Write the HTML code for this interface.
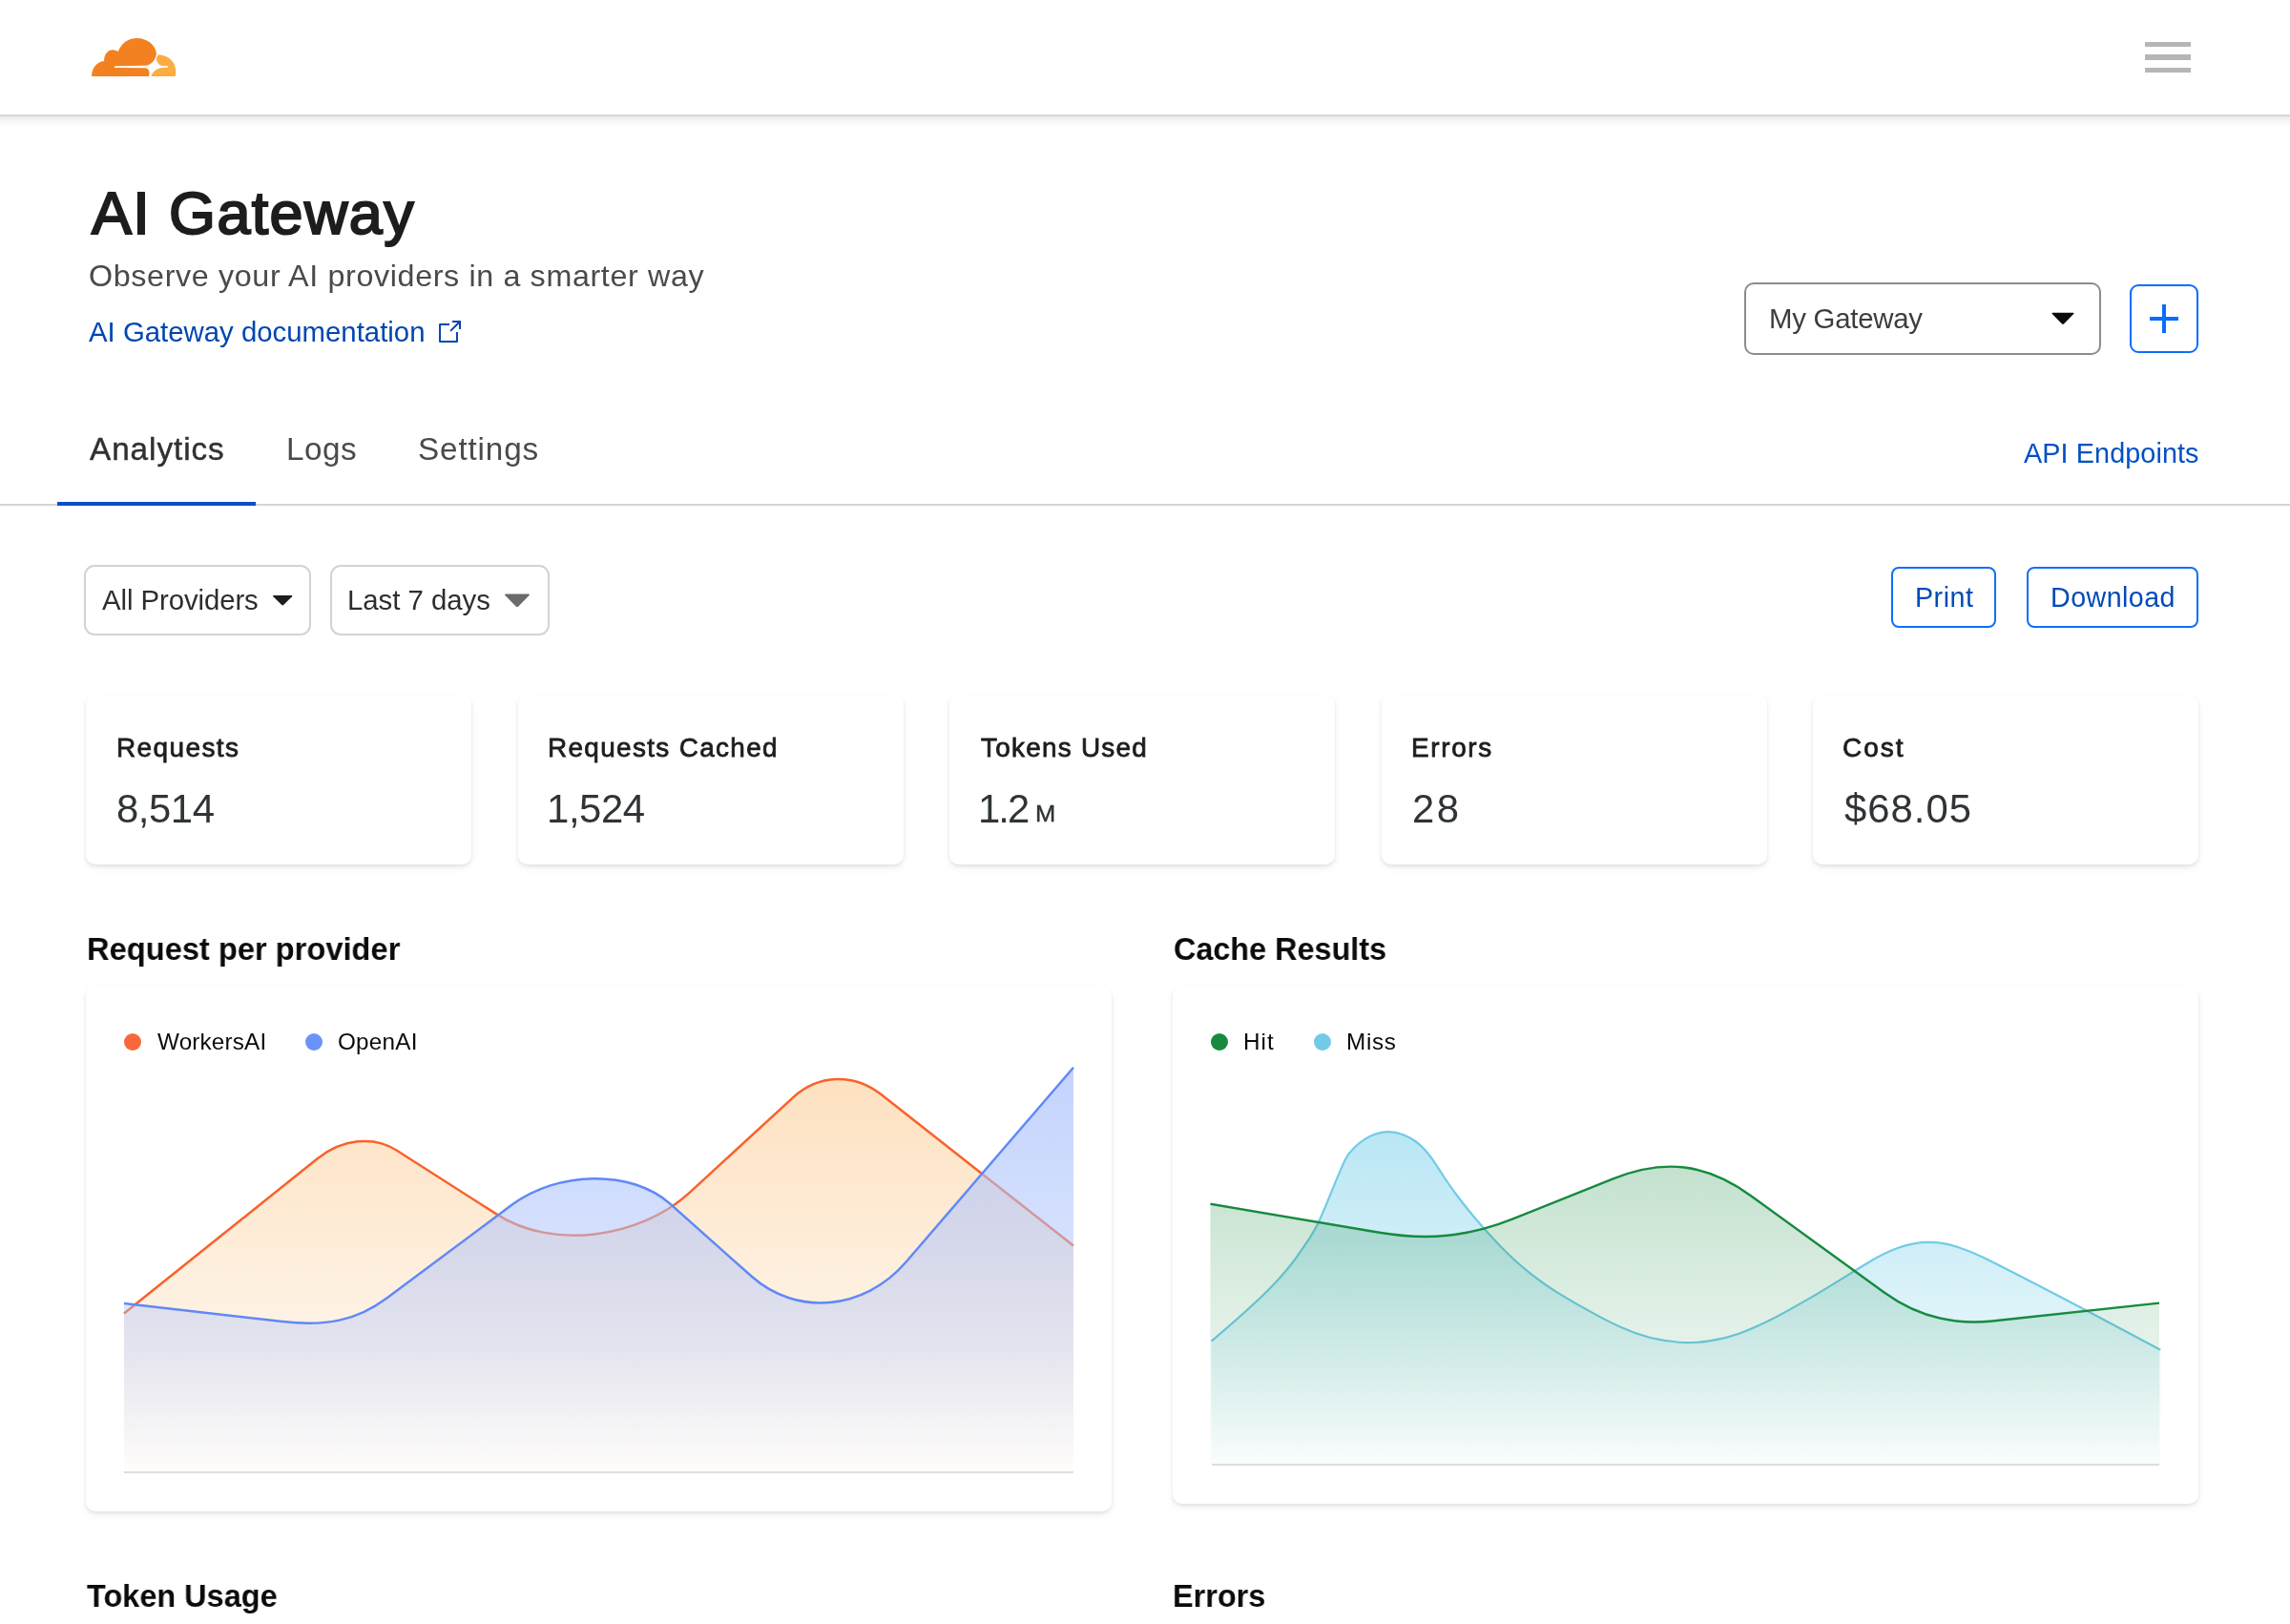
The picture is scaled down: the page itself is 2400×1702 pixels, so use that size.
<!DOCTYPE html>
<html lang="en">
<head>
<meta charset="utf-8">
<title>AI Gateway</title>
<style>
*{box-sizing:border-box;margin:0;padding:0}
html,body{width:2400px;height:1702px;background:#fff}
body{position:relative;font-family:"Liberation Sans",sans-serif;color:#1d1d1d}
.abs{position:absolute}
.t{position:absolute;white-space:pre;transform-origin:0 50%;will-change:transform;display:block;text-decoration:none;font-style:normal}
.hdrline{position:absolute;left:0;top:120px;width:2400px;height:2px;background:#d7d7d7}
.hdrshadow{position:absolute;left:0;top:122px;width:2400px;height:11px;background:linear-gradient(to bottom,rgba(0,0,0,.085),rgba(0,0,0,.04) 40%,rgba(0,0,0,0))}
.bar{position:absolute;left:2248px;width:48px;height:5.33px;background:#b6b6b6}
.select{position:absolute;left:1828px;top:296px;width:374px;height:76px;border:2px solid #8c8c8c;border-radius:10px;background:#fff}
.plus{position:absolute;left:2232px;top:298px;width:72px;height:72px;border:2px solid #0a6cff;border-radius:9px;background:#fff}
.tabline{position:absolute;left:0;top:528px;width:2400px;height:2px;background:#d5d5d5}
.tabactive{position:absolute;left:60px;top:526px;width:208px;height:4px;background:#0a4fc9}
.dd{position:absolute;top:592px;height:74px;border:2px solid #d3d3d3;border-radius:11px;background:#fff}
.btn{position:absolute;top:594px;height:64px;border:2px solid #1070f5;border-radius:8px;background:#fff}
.card{position:absolute;background:#fff;border-radius:10px;box-shadow:0 2px 4px rgba(0,0,0,.09),0 4px 10px rgba(0,0,0,.05)}
.stat{top:728px;width:404px;height:178px}
.dot{position:absolute;width:18px;height:18px;border-radius:50%}
svg{position:absolute;left:0;top:0;overflow:visible}
ul,li{list-style:none}
</style>
</head>
<body>
<header>
<div class="hdrline"></div><div class="hdrshadow"></div>
<a aria-label="Cloudflare"><svg class="abs" style="left:96px;top:40px" width="89" height="40" viewBox="183 228 1019 459">
<path fill="#f4811f" d="M183,687 C183,590 240,512 332,503 C330,420 380,368 435,368 C462,368 483,376 500,388 C540,290 620,228 725,228 C860,228 955,320 962,415 C950,490 900,552 835,558 L460,563 L458,585 L825,588 C870,592 888,632 870,687 Z"/>
<path fill="#fbad41" d="M985,425 C1110,430 1200,520 1196,640 L1190,687 L898,687 C915,630 960,590 1040,583 L1100,580 L1100,564 L1040,560 C985,552 958,510 962,462 Z"/>
</svg></a>
<div role="button" aria-label="Menu"><div class="bar" style="top:44px"></div><div class="bar" style="top:57.33px"></div><div class="bar" style="top:70.67px"></div></div>
</header>
<main>
<section aria-label="AI Gateway">
<h1 class="t" style="left:95.50px;top:191.50px;font-size:62.88px;line-height:62.88px;font-weight:400;color:#1d1d1d;letter-spacing:1.400px;-webkit-text-stroke:2.14px #1d1d1d;">AI Gateway</h1>
<p class="t" style="left:93.00px;top:273.19px;font-size:32.27px;line-height:32.27px;font-weight:400;color:#4a4a4a;letter-spacing:0.634px;">Observe your AI providers in a smarter way</p>
<a href="#" class="t" style="left:93.00px;top:333.35px;font-size:29.36px;line-height:29.36px;font-weight:400;color:#0046b0;letter-spacing:0.000px;">AI Gateway documentation</a>
<svg width="2400" height="1702"><g fill="none" stroke="#0046b0" stroke-width="2">
<path d="M471,340 H461.05 V358 H478.95 V347.9" stroke-linejoin="round"/>
<path d="M472.1,346.9 L481.5,337.5 M474,337.05 H482 V345"/>
</g></svg>
<div role="combobox" aria-label="Gateway"><div class="select"></div><svg width="2400" height="1702"><path d="M2151.3,327.8 h21.4 q1.5,0 0.5,1.3 l-10,10.2 q-1.2,1.1 -2.4,0 l-10,-10.2 q-1,-1.3 0.5,-1.3z" fill="#0a0a0a"/></svg><span class="t" style="left:1854.00px;top:319.15px;font-size:29.36px;line-height:29.36px;font-weight:400;color:#3d3d3d;letter-spacing:-0.244px;">My Gateway</span></div>
<div role="button" aria-label="Add gateway"><div class="plus"></div>
<div class="abs" style="left:2253px;top:331.5px;width:30px;height:4px;background:#0a6cff"></div>
<div class="abs" style="left:2266px;top:318.5px;width:4px;height:30px;background:#0a6cff"></div></div>
</section>
<nav aria-label="Sections">
<div class="tabline"></div><div class="tabactive"></div>
<ul><li><a href="#" class="t" style="left:94.00px;top:453.92px;font-size:33.28px;line-height:33.28px;font-weight:400;color:#313131;letter-spacing:0.950px;-webkit-text-stroke:0.45px #313131;">Analytics</a></li><li><a href="#" class="t" style="left:299.50px;top:453.92px;font-size:33.28px;line-height:33.28px;font-weight:400;color:#4a4a4a;letter-spacing:0.533px;">Logs</a></li><li><a href="#" class="t" style="left:437.50px;top:453.92px;font-size:33.28px;line-height:33.28px;font-weight:400;color:#4a4a4a;letter-spacing:0.857px;">Settings</a></li></ul>
<a href="#" class="t" style="left:2120.50px;top:460.54px;font-size:28.78px;line-height:28.78px;font-weight:400;color:#0051c3;letter-spacing:0.100px;">API Endpoints</a>
</nav>
<section aria-label="Filters">
<div role="button"><div class="dd" style="left:88px;width:238px"></div><span class="t" style="left:107.00px;top:613.55px;font-size:29.36px;line-height:29.36px;font-weight:400;color:#2d2d2d;letter-spacing:-0.083px;">All Providers</span></div>
<div role="button"><div class="dd" style="left:346px;width:230px"></div><span class="t" style="left:363.50px;top:613.55px;font-size:29.36px;line-height:29.36px;font-weight:400;color:#2d2d2d;letter-spacing:-0.020px;">Last 7 days</span></div>
<svg width="2400" height="1702">
<path d="M287,624 h18.5 q1.5,0 0.5,1.3 l-8.6,8.4 q-1.2,1.1 -2.4,0 l-8.6,-8.4 q-1,-1.3 0.6,-1.3z" fill="#1d1d1d"/>
<path d="M530,622.5 h24 q1.8,0 0.6,1.5 l-11.3,11.4 q-1.3,1.2 -2.6,0 l-11.3,-11.4 q-1.2,-1.5 0.6,-1.5z" fill="#6b6b6b"/>
</svg>
<div role="button"><div class="btn" style="left:1982px;width:110px"></div><span class="t" style="left:2006.50px;top:611.86px;font-size:28.63px;line-height:28.63px;font-weight:400;color:#004bb8;letter-spacing:0.500px;">Print</span></div>
<div role="button"><div class="btn" style="left:2124px;width:180px"></div><span class="t" style="left:2148.50px;top:611.86px;font-size:28.63px;line-height:28.63px;font-weight:400;color:#004bb8;letter-spacing:0.457px;">Download</span></div>
</section>
<section aria-label="Summary">
<article><div class="card stat" style="left:90px"></div><h3 class="t" style="left:121.50px;top:770.36px;font-size:27.93px;line-height:27.93px;font-weight:400;color:#1d1d1d;letter-spacing:1.429px;-webkit-text-stroke:0.78px #1d1d1d;">Requests</h3><p class="t" style="left:122.00px;top:826.67px;font-size:41.86px;line-height:41.86px;font-weight:400;color:#2f3437;letter-spacing:-0.450px;">8,514</p></article>
<article><div class="card stat" style="left:542.5px"></div><h3 class="t" style="left:574.00px;top:770.36px;font-size:27.93px;line-height:27.93px;font-weight:400;color:#1d1d1d;letter-spacing:1.329px;-webkit-text-stroke:0.78px #1d1d1d;">Requests Cached</h3><p class="t" style="left:573.00px;top:826.67px;font-size:41.86px;line-height:41.86px;font-weight:400;color:#2f3437;letter-spacing:-0.400px;">1,524</p></article>
<article><div class="card stat" style="left:995px"></div><h3 class="t" style="left:1028.00px;top:770.36px;font-size:27.93px;line-height:27.93px;font-weight:400;color:#1d1d1d;letter-spacing:1.240px;-webkit-text-stroke:0.78px #1d1d1d;">Tokens Used</h3><p class="t" style="left:1025.00px;top:826.67px;font-size:41.86px;line-height:41.86px;font-weight:400;color:#2f3437;letter-spacing:-2.000px;">1.2</p><span class="t" style="left:1085.00px;top:841.28px;font-size:24.71px;line-height:24.71px;font-weight:400;color:#2f3437;letter-spacing:0.000px;transform:scaleX(1.0323);-webkit-text-stroke:0.4px #2f3437;">M</span></article>
<article><div class="card stat" style="left:1447.5px"></div><h3 class="t" style="left:1478.50px;top:770.36px;font-size:27.93px;line-height:27.93px;font-weight:400;color:#1d1d1d;letter-spacing:1.640px;-webkit-text-stroke:0.78px #1d1d1d;">Errors</h3><p class="t" style="left:1480.00px;top:826.67px;font-size:41.86px;line-height:41.86px;font-weight:400;color:#2f3437;letter-spacing:2.400px;">28</p></article>
<article><div class="card stat" style="left:1900px"></div><h3 class="t" style="left:1931.00px;top:770.36px;font-size:27.93px;line-height:27.93px;font-weight:400;color:#1d1d1d;letter-spacing:2.000px;-webkit-text-stroke:0.78px #1d1d1d;">Cost</h3><p class="t" style="left:1933.00px;top:826.67px;font-size:41.86px;line-height:41.86px;font-weight:400;color:#2f3437;letter-spacing:1.000px;">$68.05</p></article>
</section>
<section aria-label="Request per provider">
<h2 class="t" style="left:90.50px;top:977.83px;font-size:33.87px;line-height:33.87px;font-weight:700;color:#0b0b0b;letter-spacing:0.000px;transform:scaleX(0.9640);">Request per provider</h2>
<div class="card" style="left:90px;top:1034px;width:1075px;height:550px"></div>
<div class="dot" style="left:130px;top:1083px;background:#f9683a"></div><span class="t" style="left:165.00px;top:1080.05px;font-size:24.27px;line-height:24.27px;font-weight:400;color:#0b0b0b;letter-spacing:0.175px;">WorkersAI</span>
<div class="dot" style="left:320px;top:1083px;background:#6b92f7"></div><span class="t" style="left:354.00px;top:1080.05px;font-size:24.27px;line-height:24.27px;font-weight:400;color:#0b0b0b;letter-spacing:0.240px;">OpenAI</span>
<svg width="2400" height="1702" role="img" aria-label="Requests per provider area chart">
<defs>
<linearGradient id="go" gradientUnits="userSpaceOnUse" x1="0" y1="1130" x2="0" y2="1543"><stop offset="0" stop-color="#fcc88c" stop-opacity=".55"/><stop offset="1" stop-color="#fcc88c" stop-opacity=".03"/></linearGradient>
<linearGradient id="gb" gradientUnits="userSpaceOnUse" x1="0" y1="1118" x2="0" y2="1543"><stop offset="0" stop-color="#afc4fc" stop-opacity=".74"/><stop offset=".43" stop-color="#afc4fc" stop-opacity=".52"/><stop offset=".7" stop-color="#afc4fc" stop-opacity=".33"/><stop offset="1" stop-color="#afc4fc" stop-opacity="0"/></linearGradient>
<linearGradient id="gg" gradientUnits="userSpaceOnUse" x1="0" y1="1222" x2="0" y2="1535"><stop offset="0" stop-color="#1a8c42" stop-opacity=".26"/><stop offset="1" stop-color="#1a8c42" stop-opacity=".01"/></linearGradient>
<linearGradient id="gm" gradientUnits="userSpaceOnUse" x1="0" y1="1186" x2="0" y2="1535"><stop offset="0" stop-color="#6ecbe8" stop-opacity=".48"/><stop offset="1" stop-color="#6ecbe8" stop-opacity=".02"/></linearGradient>
</defs>
<!-- chart 1 -->
<path d="M130.0,1376.5 L332.7,1214.3 C358.5,1193.6 391.5,1190.1 415.5,1205.5 L521.0,1272.9 C578.2,1309.5 669.3,1298.9 723.0,1249.6 L831.0,1150.3 C857.7,1125.8 894.8,1124.5 923.5,1147.1 L1125.0,1305.5 L1125,1542 L130,1542 Z" fill="url(#go)"/>
<path d="M130.0,1376.5 L332.7,1214.3 C358.5,1193.6 391.5,1190.1 415.5,1205.5 L521.0,1272.9 C578.2,1309.5 669.3,1298.9 723.0,1249.6 L831.0,1150.3 C857.7,1125.8 894.8,1124.5 923.5,1147.1 L1125.0,1305.5" fill="none" stroke="#fa612b" stroke-width="2.5"/>
<path d="M130.0,1366.0 L296.0,1385.1 C342.7,1390.5 374.6,1383.3 405.0,1360.7 L536.0,1263.1 C585.0,1226.6 662.0,1225.8 702.0,1261.4 L787.8,1337.8 C834.9,1379.8 906.1,1373.2 949.4,1322.8 L1125.0,1118.7 L1125,1542 L130,1542 Z" fill="url(#gb)"/>
<path d="M130.0,1366.0 L296.0,1385.1 C342.7,1390.5 374.6,1383.3 405.0,1360.7 L536.0,1263.1 C585.0,1226.6 662.0,1225.8 702.0,1261.4 L787.8,1337.8 C834.9,1379.8 906.1,1373.2 949.4,1322.8 L1125.0,1118.7" fill="none" stroke="#6089f7" stroke-width="2.5"/>
<rect x="130" y="1542" width="995" height="2" fill="#dedede"/>
</svg>
</section>
<section aria-label="Cache Results">
<h2 class="t" style="left:1229.50px;top:977.83px;font-size:33.87px;line-height:33.87px;font-weight:700;color:#0b0b0b;letter-spacing:0.000px;transform:scaleX(0.9560);">Cache Results</h2>
<div class="card" style="left:1229px;top:1034px;width:1075px;height:542px"></div>
<div class="dot" style="left:1269px;top:1083px;background:#178a3f"></div><span class="t" style="left:1302.50px;top:1080.05px;font-size:24.27px;line-height:24.27px;font-weight:400;color:#0b0b0b;letter-spacing:1.000px;">Hit</span>
<div class="dot" style="left:1377px;top:1083px;background:#72cbe6"></div><span class="t" style="left:1410.50px;top:1080.05px;font-size:24.27px;line-height:24.27px;font-weight:400;color:#0b0b0b;letter-spacing:0.667px;">Miss</span>
<svg width="2400" height="1702" role="img" aria-label="Cache results area chart">
<!-- chart 2 -->
<path d="M1269.6,1405.6 C1290.0,1388.3 1310.3,1370.9 1330.7,1350.5 C1341.9,1339.3 1353.2,1326.6 1364.4,1309.7 C1370.5,1300.6 1376.6,1292.6 1382.7,1279.2 C1391.7,1259.3 1400.8,1234.4 1409.8,1215.4 C1413.4,1207.9 1416.9,1205.3 1420.5,1201.8 C1427.0,1195.4 1433.5,1191.5 1440.0,1189.0 C1445.1,1187.1 1450.1,1186.2 1455.2,1186.2 C1460.1,1186.2 1465.1,1187.2 1470.0,1189.0 C1475.7,1191.1 1481.3,1194.0 1487.0,1198.8 C1491.8,1202.9 1496.7,1208.5 1501.5,1215.4 C1505.6,1221.2 1509.6,1227.9 1513.7,1234.0 C1517.8,1240.2 1521.9,1245.9 1526.0,1251.5 C1530.7,1257.8 1535.3,1263.8 1540.0,1269.5 C1545.3,1276.0 1550.7,1282.3 1556.0,1288.3 C1561.1,1294.0 1566.3,1299.8 1571.4,1305.0 C1576.7,1310.4 1581.9,1315.8 1587.2,1320.5 C1592.4,1325.2 1597.7,1329.7 1602.9,1333.8 C1613.4,1342.0 1623.8,1349.4 1634.3,1355.9 C1650.0,1365.7 1665.8,1374.3 1681.5,1382.6 C1692.0,1388.1 1702.4,1392.8 1712.9,1396.7 C1723.4,1400.6 1733.9,1403.3 1744.4,1404.8 C1752.3,1405.9 1760.1,1407.2 1768.0,1407.2 C1775.8,1407.2 1783.7,1406.6 1791.5,1405.4 C1802.0,1403.8 1812.5,1401.3 1823.0,1397.5 C1833.5,1393.7 1843.9,1389.0 1854.4,1383.8 C1869.6,1376.2 1884.8,1367.4 1900.0,1358.6 C1920.0,1347.0 1940.0,1334.0 1960.0,1322.0 C1970.0,1316.0 1980.0,1311.1 1990.0,1307.5 C2000.5,1303.7 2010.9,1301.8 2021.4,1301.8 C2031.6,1301.8 2041.8,1303.6 2052.0,1307.0 C2061.3,1310.1 2070.7,1313.8 2080.0,1318.5 C2141.4,1349.2 2202.9,1381.9 2264.3,1414.8 L2264.3,1534 L1269.6,1534 Z" fill="url(#gm)"/>
<path d="M1269.6,1405.6 C1290.0,1388.3 1310.3,1370.9 1330.7,1350.5 C1341.9,1339.3 1353.2,1326.6 1364.4,1309.7 C1370.5,1300.6 1376.6,1292.6 1382.7,1279.2 C1391.7,1259.3 1400.8,1234.4 1409.8,1215.4 C1413.4,1207.9 1416.9,1205.3 1420.5,1201.8 C1427.0,1195.4 1433.5,1191.5 1440.0,1189.0 C1445.1,1187.1 1450.1,1186.2 1455.2,1186.2 C1460.1,1186.2 1465.1,1187.2 1470.0,1189.0 C1475.7,1191.1 1481.3,1194.0 1487.0,1198.8 C1491.8,1202.9 1496.7,1208.5 1501.5,1215.4 C1505.6,1221.2 1509.6,1227.9 1513.7,1234.0 C1517.8,1240.2 1521.9,1245.9 1526.0,1251.5 C1530.7,1257.8 1535.3,1263.8 1540.0,1269.5 C1545.3,1276.0 1550.7,1282.3 1556.0,1288.3 C1561.1,1294.0 1566.3,1299.8 1571.4,1305.0 C1576.7,1310.4 1581.9,1315.8 1587.2,1320.5 C1592.4,1325.2 1597.7,1329.7 1602.9,1333.8 C1613.4,1342.0 1623.8,1349.4 1634.3,1355.9 C1650.0,1365.7 1665.8,1374.3 1681.5,1382.6 C1692.0,1388.1 1702.4,1392.8 1712.9,1396.7 C1723.4,1400.6 1733.9,1403.3 1744.4,1404.8 C1752.3,1405.9 1760.1,1407.2 1768.0,1407.2 C1775.8,1407.2 1783.7,1406.6 1791.5,1405.4 C1802.0,1403.8 1812.5,1401.3 1823.0,1397.5 C1833.5,1393.7 1843.9,1389.0 1854.4,1383.8 C1869.6,1376.2 1884.8,1367.4 1900.0,1358.6 C1920.0,1347.0 1940.0,1334.0 1960.0,1322.0 C1970.0,1316.0 1980.0,1311.1 1990.0,1307.5 C2000.5,1303.7 2010.9,1301.8 2021.4,1301.8 C2031.6,1301.8 2041.8,1303.6 2052.0,1307.0 C2061.3,1310.1 2070.7,1313.8 2080.0,1318.5 C2141.4,1349.2 2202.9,1381.9 2264.3,1414.8" fill="none" stroke="#72cbe6" stroke-width="2.2"/>
<path d="M1268.5,1261.8 L1445.6,1291.8 C1496.0,1300.3 1539.5,1296.0 1585.0,1277.7 L1690.0,1235.6 C1744.2,1213.9 1788.1,1219.2 1835.0,1253.2 L1975.0,1354.7 C2008.0,1378.6 2047.1,1388.9 2088.0,1384.5 L2263.0,1365.6 L2263,1534 L1268.5,1534 Z" fill="url(#gg)"/>
<path d="M1268.5,1261.8 L1445.6,1291.8 C1496.0,1300.3 1539.5,1296.0 1585.0,1277.7 L1690.0,1235.6 C1744.2,1213.9 1788.1,1219.2 1835.0,1253.2 L1975.0,1354.7 C2008.0,1378.6 2047.1,1388.9 2088.0,1384.5 L2263.0,1365.6" fill="none" stroke="#178a3f" stroke-width="2.4"/>
<rect x="1270" y="1534" width="993" height="2" fill="#dedede"/>
</svg>
</section>
<section aria-label="Token Usage"><h2 class="t" style="left:91.00px;top:1655.93px;font-size:33.87px;line-height:33.87px;font-weight:700;color:#0b0b0b;letter-spacing:0.000px;transform:scaleX(0.9585);">Token Usage</h2></section>
<section aria-label="Errors"><h2 class="t" style="left:1228.50px;top:1655.93px;font-size:33.87px;line-height:33.87px;font-weight:700;color:#0b0b0b;letter-spacing:0.000px;transform:scaleX(0.9576);">Errors</h2></section>
</main>
</body>
</html>
